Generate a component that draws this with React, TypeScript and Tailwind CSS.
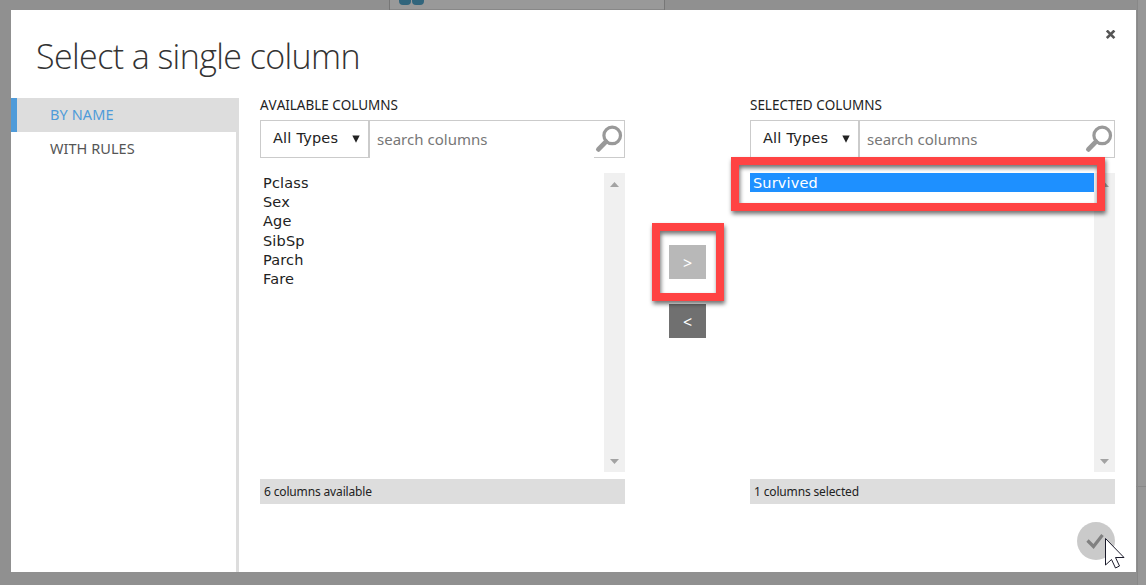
import React from 'react';

function SearchIcon() {
  return (
    <svg width="30" height="32" viewBox="0 0 30 32" fill="none" stroke="#999999">
      <circle cx="18.2" cy="11.4" r="8.3" strokeWidth="3.2" />
      <path d="M12 17.6 L4.4 25.4" strokeWidth="4.8" strokeLinecap="round" />
    </svg>
  );
}

type PickerProps = {
  title: string;
  items: string[];
  selected?: string;
  status: string;
};

function ColumnPicker({ title, items, selected, status }: PickerProps) {
  return (
    <section className="flex w-[365px] flex-col">
      <h2 className="h-[22px] whitespace-nowrap text-[13.5px] leading-[14px] tracking-[-0.03px] text-[#222] [font-kerning:none]">{title}</h2>
      <div className="flex h-[38px]">
        <button className="flex w-[110px] items-center justify-between border border-r-2 border-[#cbcbcb] pr-2 pl-3 font-['DejaVu_Sans',sans-serif] text-[14.5px] text-[#222]">
          <span className="whitespace-nowrap tracking-[0.2px]">All Types</span>
          <svg width="8" height="8" viewBox="0 0 8 8" fill="#222"><path d="M0.3 0.5H7.7L4 7.8Z" /></svg>
        </button>
        <div className="flex flex-1 border-t border-[#cbcbcb]">
          <div className="flex flex-1 items-center pb-px pl-[7px] text-[15px] tracking-[0.02px] text-[#777]">search columns</div>
          <div className="w-[31px] border-r border-b border-[#cbcbcb] pt-[3px]">
            <SearchIcon />
          </div>
        </div>
      </div>
      <div className="mt-[15px] flex h-[299px]">
        <ul className="flex-1 font-['DejaVu_Sans',sans-serif] text-[14.5px] leading-[19.2px] tracking-[0.15px] text-[#222]">
          {items.map((item) => (
            <li key={item} className={item === selected ? 'h-[19px] bg-[#1e90ff] pl-[3px] text-white' : 'pl-[3px]'}>
              <span className="relative top-px">{item}</span>
            </li>
          ))}
        </ul>
        <div className="flex w-[21px] flex-col items-center justify-between bg-[#f0f0f0] pt-[9px] pb-2">
          <svg width="9" height="5" viewBox="0 0 9 5" fill="#a3a3a3"><path d="M0 5L4.5 0L9 5Z" /></svg>
          <svg width="9" height="5" viewBox="0 0 9 5" fill="#a3a3a3"><path d="M0 0L4.5 5L9 0Z" /></svg>
        </div>
      </div>
      <div className="mt-[7px] h-[25px] bg-[#ddd] pl-1 text-[12px] leading-[25px] tracking-[-0.15px] text-[#222]">{status}</div>
    </section>
  );
}

export default function App() {
  return (
    <div className="relative h-[585px] w-[1146px] overflow-hidden bg-[#909090] pt-[10px] pl-[11px] font-['Noto_Sans',sans-serif]">
      <svg className="absolute top-0 left-0" width="1146" height="585">
        <path d="M389.5 -3V10H664.5V-3" fill="#999" stroke="#777" />
        <rect x="399" y="-5" width="12" height="10" rx="4" fill="#31657c" />
        <rect x="412" y="-5" width="12" height="10" rx="4" fill="#31657c" />
        <rect x="1137" y="0" width="9" height="585" fill="#979797" />
        <path d="M1137.5 0V585M1136 486.5H1146" stroke="#888" />
      </svg>

      <main className="relative h-[562px] w-[1125px] bg-white">
        <header className="flex h-[88px] justify-between">
          <h1 className="mt-[21px] ml-[25px] whitespace-nowrap font-['Open_Sans',sans-serif] text-[34px] leading-[50px] font-light tracking-[-0.6px] text-[#333]">Select a single column</h1>
          <button aria-label="Close" className="mt-5 mr-5 h-[10px] w-[10px]">
            <svg width="10" height="10" viewBox="0 0 10 10" stroke="#555" strokeWidth="2.6"><path d="M0.8 0.5L8.4 8.1M8.4 0.5L0.8 8.1" /></svg>
          </button>
        </header>

        <div className="flex h-[474px]">
          <nav className="w-[228px] border-r-3 border-[#ddd] text-[14.5px] leading-[33px] [font-kerning:none]">
            <div className="h-[34px] border-l-6 border-[#4f9bd9] bg-[#ddd] pl-[33px] tracking-[0.1px] text-[#4f9bd9]">BY NAME</div>
            <div className="h-[34px] pl-[39px] tracking-[0.05px] text-[#555]">WITH RULES</div>
          </nav>

          <div className="flex pl-[21px]">
            <ColumnPicker title="AVAILABLE COLUMNS" items={['Pclass', 'Sex', 'Age', 'SibSp', 'Parch', 'Fare']} status="6 columns available" />
            <div className="flex w-[125px] flex-col gap-[25px] pt-[147px] pl-11 text-[16px] text-white">
              <button className="h-[34px] w-[37px] bg-[#b8b8b8] pt-0.5">&gt;</button>
              <button className="h-[34px] w-[37px] bg-[#707070] pt-0.5">&lt;</button>
            </div>
            <ColumnPicker title="SELECTED COLUMNS" items={['Survived']} selected="Survived" status="1 columns selected" />
          </div>
        </div>

        <button aria-label="Confirm" className="absolute top-[512px] left-[1066px] flex h-[38px] w-[38px] items-center justify-center rounded-full bg-[#cacaca] pr-0.5">
          <svg width="20" height="18" viewBox="0 0 20 18" fill="none" stroke="#808080" strokeWidth="3.2"><path d="M2.5 8.5L8.5 14.5L17.5 3" /></svg>
        </button>
      </main>

      <svg className="pointer-events-none absolute top-0 left-0" width="1146" height="585" fill="none">
        <g stroke="#ff4343" strokeWidth="8" className="[filter:drop-shadow(1px_3px_2px_rgb(0_0_0/0.55))]">
          <rect x="735" y="161" width="366" height="46" />
          <rect x="656" y="227" width="64" height="70" />
        </g>
        <path d="M1105.5 538.5V565L1111.5 559.5L1115.5 568L1119.5 566L1115.5 557.5H1124Z" fill="white" stroke="#1b1b2b" />
      </svg>
    </div>
  );
}
